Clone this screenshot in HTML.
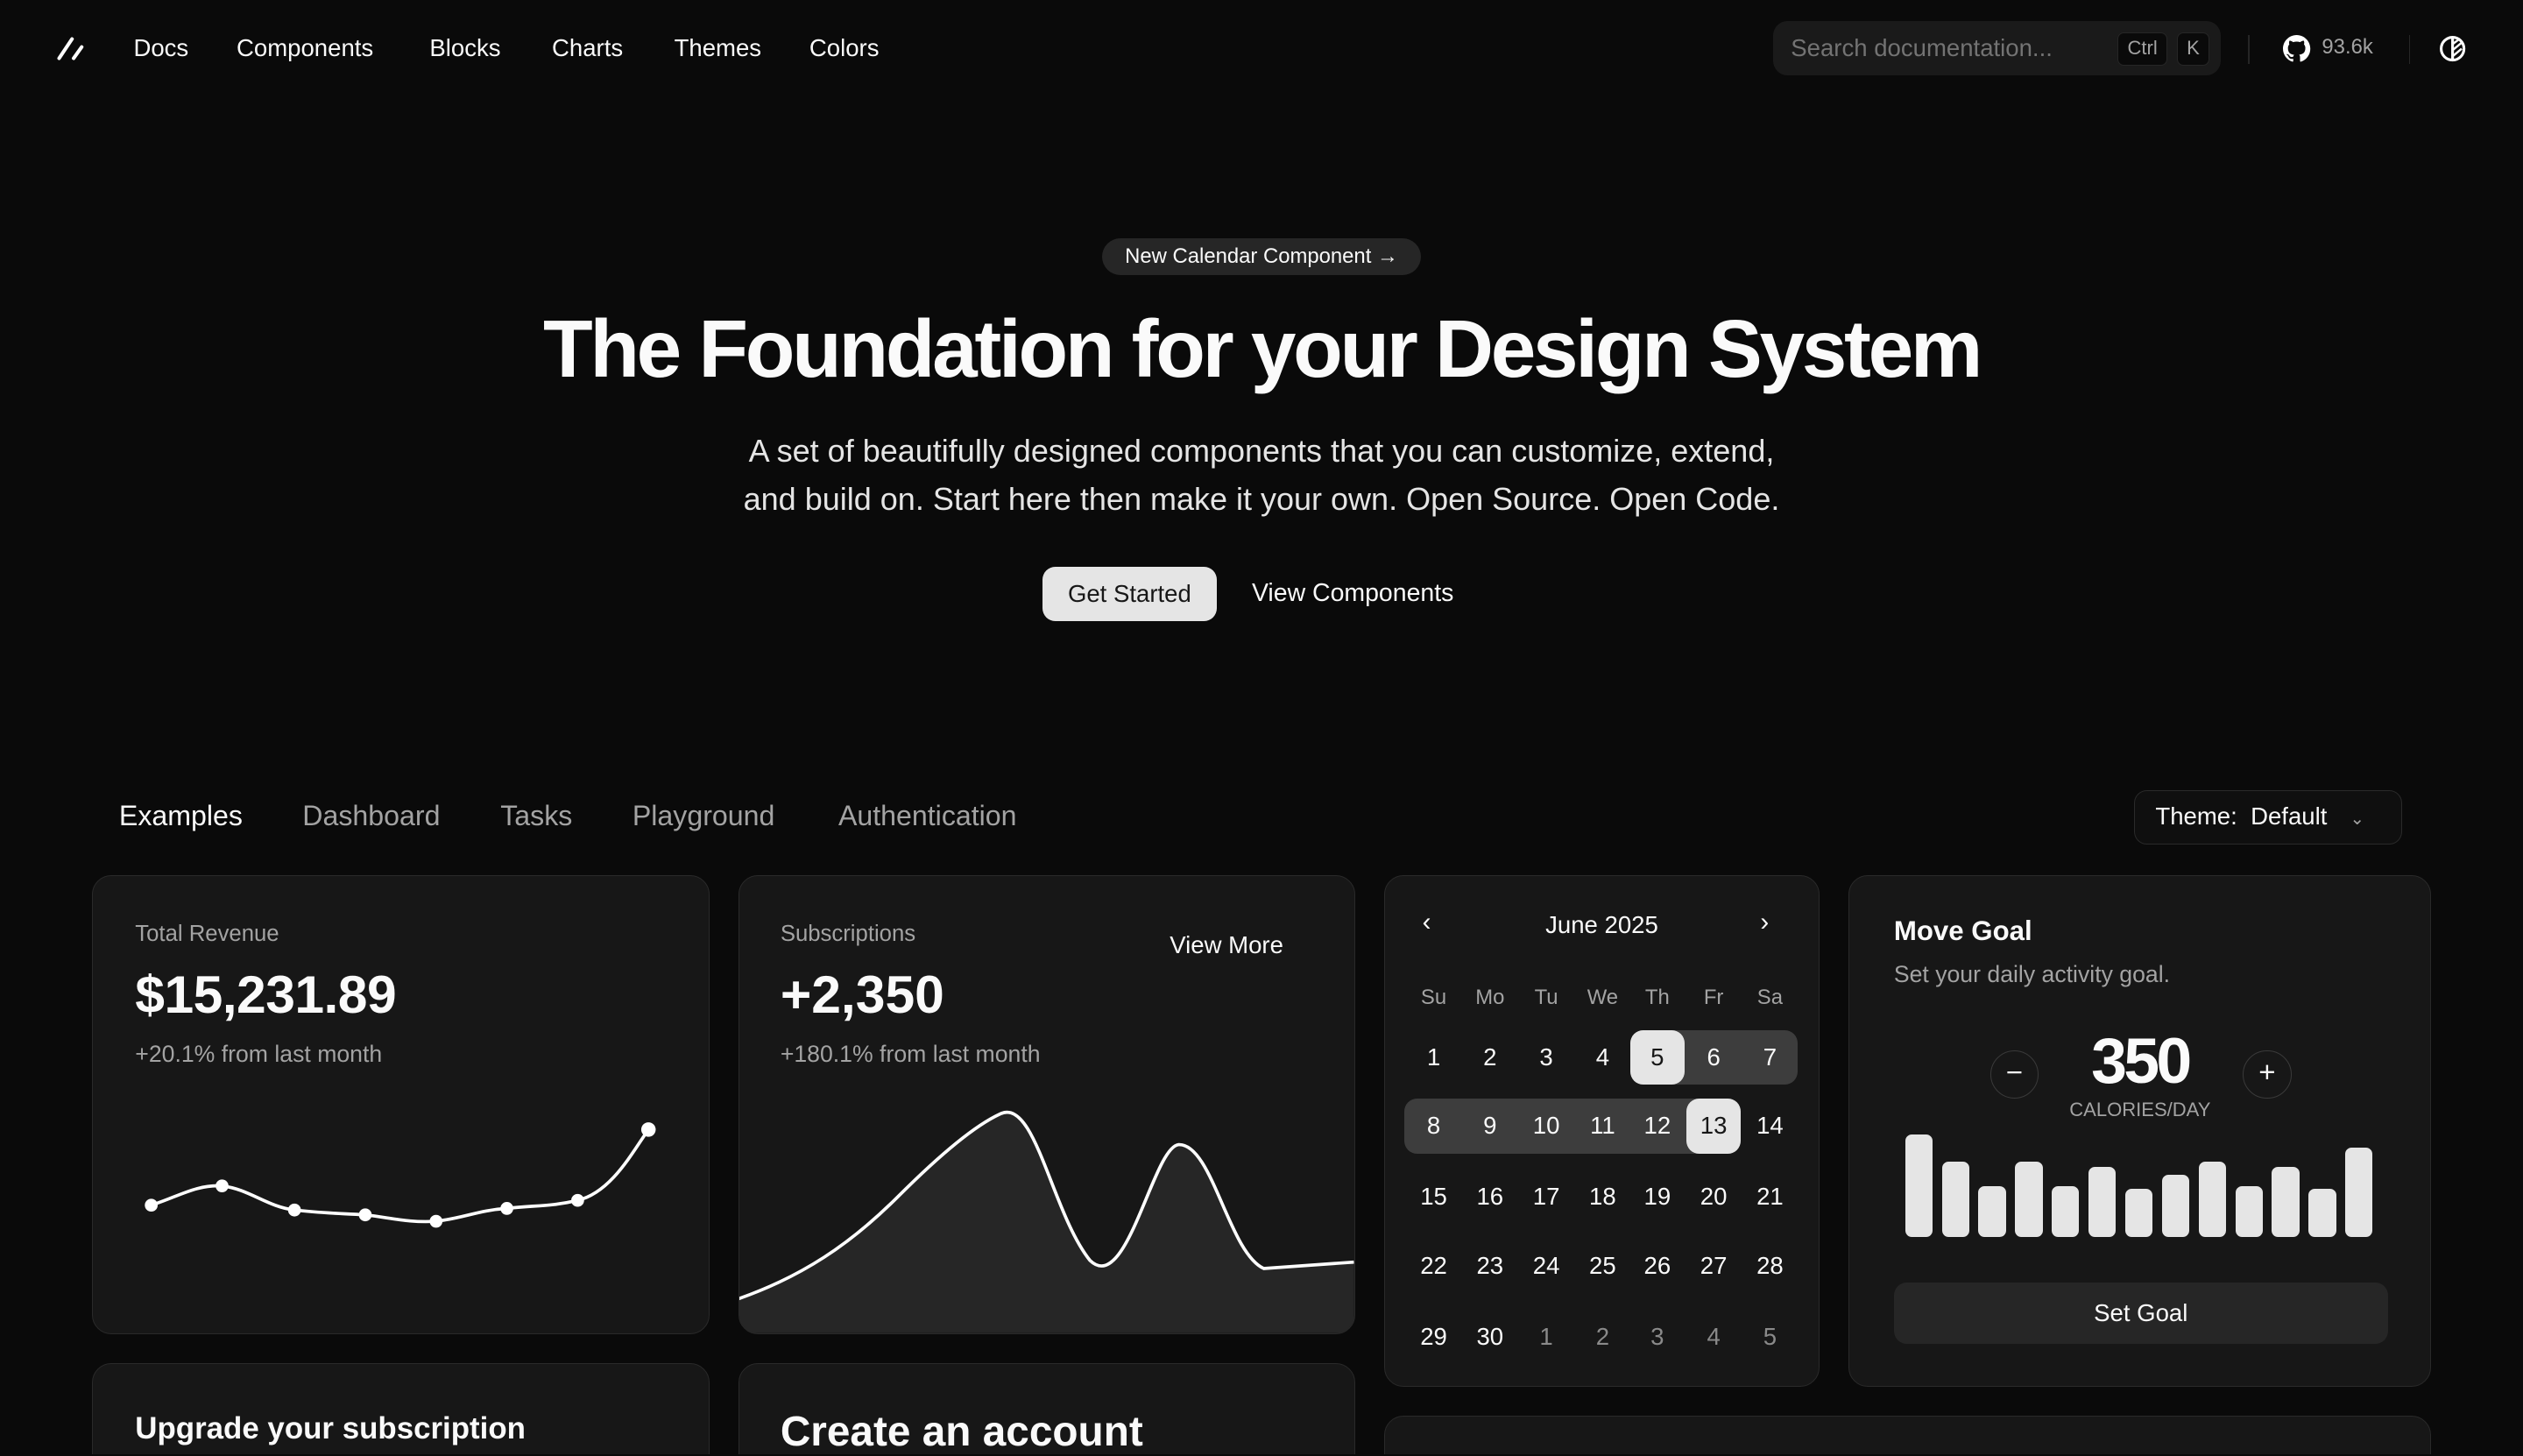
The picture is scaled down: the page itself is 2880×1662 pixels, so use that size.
<!DOCTYPE html>
<html><head><meta charset="utf-8">
<style>
html,body{margin:0;padding:0;background:#0a0a0a;overflow:hidden}
body{width:2880px;height:1662px}
#w{position:relative;width:1568px;height:904px;overflow:hidden;zoom:1.836735;font-family:"Liberation Sans",sans-serif;color:#fafafa}
.a{position:absolute;white-space:nowrap}
.nav{font-size:15px;font-weight:500;top:21px}
.card{position:absolute;background:#171717;border:1px solid #2a2a2a;border-radius:12px;box-sizing:border-box}
.g{color:#a3a3a3}
.tab{font-size:17.5px;top:497px;color:#a3a3a3}
.cal{position:absolute;width:34px;height:34px;line-height:34px;text-align:center;font-size:15px}
.bar{position:absolute;width:17px;background:#e5e5e5;border-radius:4px;bottom:0}
</style></head><body><div id="w">
<!-- nav -->
<svg class="a" style="left:34px;top:21px" width="20" height="18" viewBox="0 0 20 18"><path d="M11 3 L3 15 M17 8 L12 15" stroke="#fff" stroke-width="2.2" stroke-linecap="round"/></svg>
<div class="a nav" style="left:83px">Docs</div>
<div class="a nav" style="left:147px">Components</div>
<div class="a nav" style="left:267px">Blocks</div>
<div class="a nav" style="left:343px">Charts</div>
<div class="a nav" style="left:419px">Themes</div>
<div class="a nav" style="left:503px">Colors</div>
<div class="a" style="left:1102px;top:13px;width:278px;height:34px;background:#1a1a1a;border-radius:9px"></div>
<div class="a" style="left:1113px;top:21px;font-size:15px;color:#737373">Search documentation...</div>
<div class="a" style="left:1316px;top:20px;width:31px;height:21px;background:#0a0a0a;border:1px solid #262626;border-radius:4px;box-sizing:border-box;font-size:12px;color:#a3a3a3;text-align:center;line-height:19px">Ctrl</div>
<div class="a" style="left:1353px;top:20px;width:20px;height:21px;background:#0a0a0a;border:1px solid #262626;border-radius:4px;box-sizing:border-box;font-size:12px;color:#a3a3a3;text-align:center;line-height:19px">K</div>
<div class="a" style="left:1397px;top:22px;width:1px;height:18px;background:#262626"></div>
<svg class="a" style="left:1419px;top:22px" width="17" height="17" viewBox="0 0 16 16"><path fill="#fff" d="M8 0C3.58 0 0 3.58 0 8c0 3.54 2.29 6.530 5.470 7.59.4.07.55-.17.55-.38v-1.33c-2.23.48-2.7-1.070-2.7-1.070-.36-.92-.89-1.17-.89-1.17-.73-.5.06-.49.06-.49.8.06 1.23.83 1.23.83.71 1.22 1.87.87 2.33.66.07-.52.28-.87.5-1.070-1.78-.2-3.64-.89-3.64-3.95 0-.87.31-1.59.82-2.15-.08-.2-.36-1.02.08-2.12 0 0 .67-.21 2.2.82A7.6 7.6 0 0 1 8 3.870c.68 0 1.36.09 2 .27 1.53-1.04 2.2-.82 2.2-.82.44 1.1.16 1.92.08 2.12.51.56.82 1.27.82 2.15 0 3.070-1.87 3.75-3.65 3.95.29.25.54.73.54 1.48v2.19c0 .21.15.46.55.38A8 8 0 0 0 16 8c0-4.42-3.58-8-8-8z"/></svg>
<div class="a" style="left:1443px;top:22px;font-size:13px;color:#a3a3a3">93.6k</div>
<div class="a" style="left:1497px;top:22px;width:1px;height:18px;background:#262626"></div>
<svg class="a" style="left:1516px;top:22px" width="17" height="17" viewBox="0 0 18 18"><circle cx="9" cy="9" r="7.5" fill="none" stroke="#fff" stroke-width="1.8"/><path d="M9 1.5v15" stroke="#fff" stroke-width="1.8"/><path d="M9 6l4-3M9 10l6-5M9 14l6-5" stroke="#fff" stroke-width="1.4"/></svg>
<!-- hero -->
<div class="a" style="left:685px;top:148px;width:198px;height:23px;background:#262626;border-radius:12px;font-size:13px;font-weight:500;line-height:23px;text-align:center">New Calendar Component →</div>
<div class="a" style="left:0;width:1568px;top:188px;text-align:center;font-size:50.5px;font-weight:700;letter-spacing:-1.8px">The Foundation for your Design System</div>
<div class="a" style="left:0;width:1568px;top:265px;text-align:center;font-size:19.6px;line-height:30px;color:#e5e5e5">A set of beautifully designed components that you can customize, extend,<br>and build on. Start here then make it your own. Open Source. Open Code.</div>
<div class="a" style="left:648px;top:352px;width:108px;height:34px;background:#e5e5e5;border-radius:8px;color:#171717;font-size:15px;font-weight:500;text-align:center;line-height:34px">Get Started</div>
<div class="a" style="left:778px;top:360px;font-size:15.5px;font-weight:500">View Components</div>
<!-- tabs -->
<div class="a tab" style="left:74px;color:#fafafa;font-weight:500">Examples</div>
<div class="a tab" style="left:188px">Dashboard</div>
<div class="a tab" style="left:311px">Tasks</div>
<div class="a tab" style="left:393px">Playground</div>
<div class="a tab" style="left:521px">Authentication</div>
<div class="a" style="left:1326px;top:491px;width:167px;height:34px;border:1px solid #2a2a2a;border-radius:8px;box-sizing:border-box;font-size:15px;line-height:32px;padding-left:13px;background:#0f0f0f"><b style="font-weight:500">Theme:</b>&nbsp; Default <span style="color:#a3a3a3;font-size:11px;margin-left:10px">⌄</span></div>
<!-- card 1 -->
<div class="card" style="left:57px;top:544px;width:384px;height:285px"></div>
<div class="a g" style="left:84px;top:573px;font-size:14px">Total Revenue</div>
<div class="a" style="left:84px;top:599px;font-size:33px;font-weight:700;letter-spacing:-0.3px">$15,231.89</div>
<div class="a g" style="left:84px;top:647px;font-size:14.5px">+20.1% from last month</div>
<svg class="a" style="left:0;top:0" width="1568" height="905"><path d="M94 749 C110 744 122 736 138 737 C155 739 166 750 183 752 C200 754 210 754 227 755 C244 757 254 760 271 759 C288 757 298 752 315 751 C332 749 342 750 359 746 C380 741 393 716 403 702" fill="none" stroke="#fff" stroke-width="2"/>
<g fill="#fff"><circle cx="94" cy="749" r="4"/><circle cx="138" cy="737" r="4"/><circle cx="183" cy="752" r="4"/><circle cx="227" cy="755" r="4"/><circle cx="271" cy="759" r="4"/><circle cx="315" cy="751" r="4"/><circle cx="359" cy="746" r="4"/><circle cx="403" cy="702" r="4.5"/></g></svg>
<!-- card 2 -->
<div class="card" style="left:459px;top:544px;width:383px;height:285px;overflow:hidden">
<svg style="position:absolute;left:-1px;top:-1px" width="383" height="285"><path d="M0 264 C40 250 70 230 100 200 C130 170 150 155 163 149 C185 138 195 210 219 240 C242 262 258 170 274 168 C295 167 305 235 327 245 L383 241 L383 285 L0 285 Z" fill="#262626"/><path d="M0 264 C40 250 70 230 100 200 C130 170 150 155 163 149 C185 138 195 210 219 240 C242 262 258 170 274 168 C295 167 305 235 327 245 L383 241" fill="none" stroke="#fff" stroke-width="2"/></svg></div>
<div class="a g" style="left:485px;top:573px;font-size:14px">Subscriptions</div>
<div class="a" style="left:485px;top:599px;font-size:33px;font-weight:700">+2,350</div>
<div class="a g" style="left:485px;top:647px;font-size:14.5px">+180.1% from last month</div>
<div class="a" style="left:727px;top:579px;font-size:15px;font-weight:500">View More</div>
<!-- card 3 calendar -->
<div class="card" style="left:860px;top:544px;width:271px;height:318px"></div>
<div class="a" style="left:884px;top:564px;font-size:16px">‹</div>
<div class="a" style="left:1094px;top:564px;font-size:16px">›</div>
<div class="a" style="left:860px;width:271px;text-align:center;top:566px;font-size:15px;font-weight:500">June 2025</div>
<div class="a" style="left:1013px;top:640px;width:104px;height:34px;background:#3d3d3d;border-radius:8px"></div>
<div class="a" style="left:873px;top:683px;width:209px;height:34px;background:#3d3d3d;border-radius:8px"></div>
<div class="a" style="left:1013px;top:640px;width:34px;height:34px;background:#e5e5e5;border-radius:8px"></div>
<div class="a" style="left:1048px;top:683px;width:34px;height:34px;background:#e5e5e5;border-radius:8px"></div>
<div id="cal"></div>
<!-- card 4 -->
<div class="card" style="left:1149px;top:544px;width:362px;height:318px"></div>
<div class="a" style="left:1177px;top:569px;font-size:17px;font-weight:700">Move Goal</div>
<div class="a g" style="left:1177px;top:597px;font-size:14.5px">Set your daily activity goal.</div>
<div class="a" style="left:1237px;top:653px;width:30px;height:30px;border:1px solid #3a3a3a;border-radius:50%;box-sizing:border-box;text-align:center;line-height:27px;font-size:18px">−</div>
<div class="a" style="left:1394px;top:653px;width:30px;height:30px;border:1px solid #3a3a3a;border-radius:50%;box-sizing:border-box;text-align:center;line-height:27px;font-size:18px">+</div>
<div class="a" style="left:1230px;width:200px;text-align:center;top:636px;font-size:40px;font-weight:700;letter-spacing:-2px">350</div>
<div class="a g" style="left:1230px;width:200px;text-align:center;top:683px;font-size:12px">CALORIES/DAY</div>
<div class="a" style="left:1184px;top:700px;width:300px;height:69px" id="bars"></div>
<div class="a" style="left:1177px;top:797px;width:307px;height:38px;background:#262626;border-radius:8px;text-align:center;line-height:38px;font-size:15px;font-weight:500">Set Goal</div>
<!-- bottom cards -->
<div class="card" style="left:57px;top:847px;width:384px;height:100px"></div>
<div class="a" style="left:84px;top:877px;font-size:19px;font-weight:700">Upgrade your subscription</div>
<div class="card" style="left:459px;top:847px;width:383px;height:100px"></div>
<div class="a" style="left:485px;top:875px;font-size:26px;font-weight:700">Create an account</div>
<div class="card" style="left:860px;top:880px;width:651px;height:100px"></div>
<script>
var c=document.getElementById('cal'),xs=[874,909,944,979,1013,1048,1083],h='';
['Su','Mo','Tu','We','Th','Fr','Sa'].forEach(function(d,i){h+='<div class="cal" style="left:'+xs[i]+'px;top:603px;color:#a3a3a3;font-size:13px">'+d+'</div>'});
var rows=[[1,2,3,4,5,6,7],[8,9,10,11,12,13,14],[15,16,17,18,19,20,21],[22,23,24,25,26,27,28],[29,30,1,2,3,4,5]],ys=[640,683,727,770,814];
rows.forEach(function(r,ri){r.forEach(function(d,i){var col='#fafafa';if(ri==4&&i>1)col='#8a8a8a';if((ri==0&&i==4)||(ri==1&&i==5))col='#171717';h+='<div class="cal" style="left:'+xs[i]+'px;top:'+ys[ri]+'px;color:'+col+'">'+d+'</div>'})});
c.innerHTML=h;
var b=document.getElementById('bars'),t=[705,722,737,722,737,725,739,730,722,737,725,739,713],bh='';
t.forEach(function(v,i){bh+='<div class="bar" style="left:'+(i*22.8)+'px;height:'+(769-v)+'px"></div>'});b.innerHTML=bh;
</script>
</div></body></html>
